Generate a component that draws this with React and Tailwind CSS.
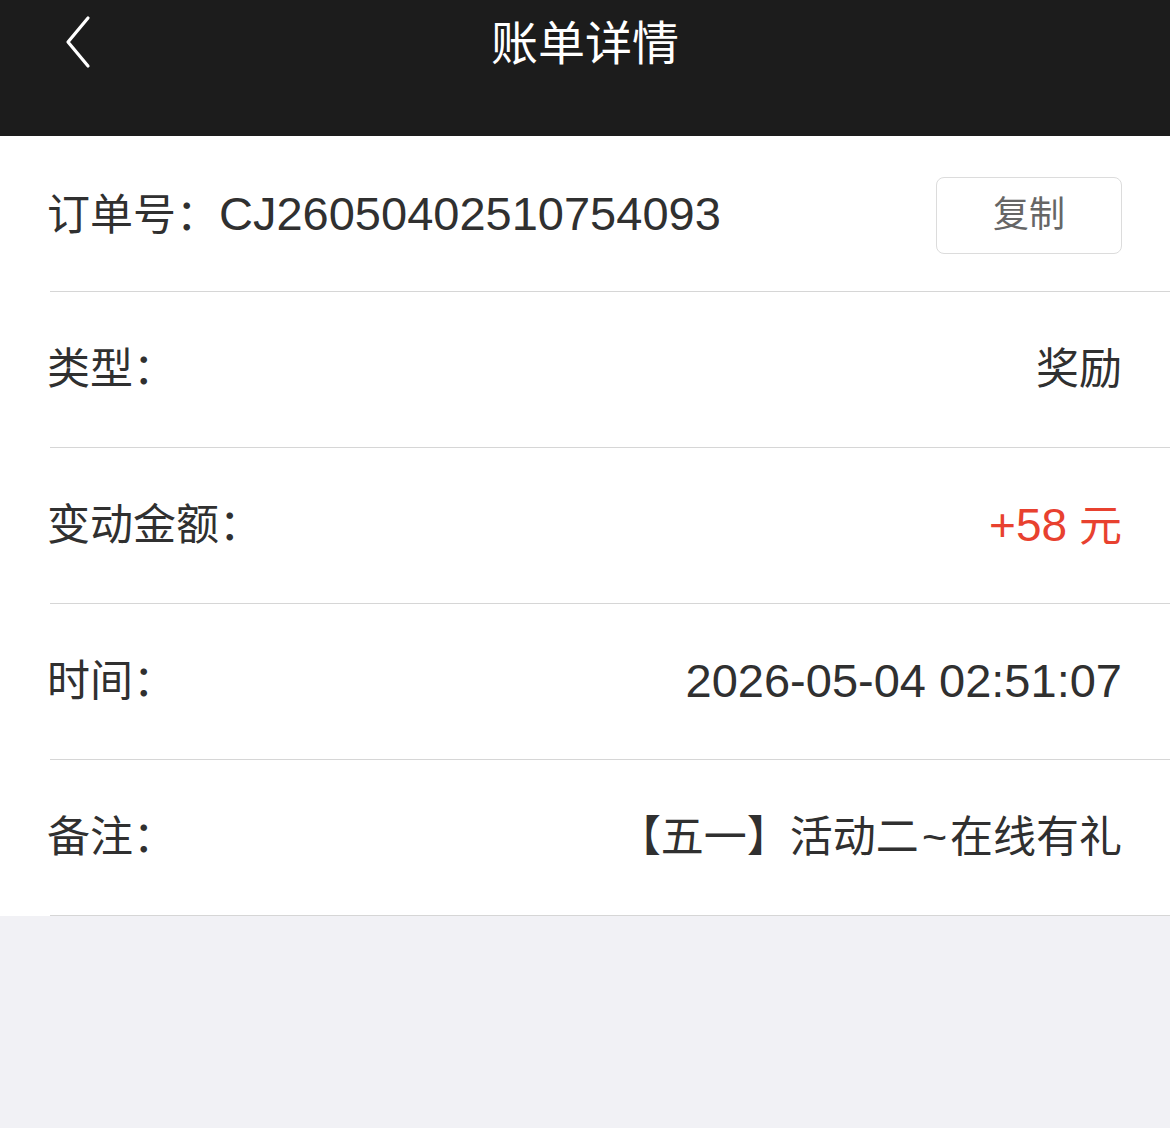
export default function App() {
  const rows = [
    { label: '类型：', value: <span>奖励</span> },
    {
      label: '变动金额：',
      value: (
        <span className="text-[#e8412f]">
          <span className="text-[46px]">+58</span> 元
        </span>
      ),
    },
    { label: '时间：', value: <span className="text-[47px]">2026-05-04 02:51:07</span> },
    {
      label: '备注：',
      value: (
        <span>
          【五一】活动二<span className="mx-[3px]">~</span>在线有礼
        </span>
      ),
    },
  ];

  return (
    <div
      className="min-h-[1128px] bg-[#f1f1f5] text-[#303030]"
      style={{ fontFamily: '"Liberation Sans", "Noto Sans CJK SC", sans-serif' }}
    >
      <div className="h-[136px] bg-[#1c1c1c]">
        <div className="relative flex h-[88px] items-center justify-center">
          <button className="absolute left-[58px] top-[10px] p-1">
            <svg width="32" height="56" viewBox="0 0 32 56" fill="none">
              <path d="M26 4 L6 28 L26 52" stroke="#fff" strokeWidth="3.2" strokeLinecap="round" strokeLinejoin="round" />
            </svg>
          </button>
          <h1 className="text-[47px] font-normal text-white">账单详情</h1>
        </div>
      </div>

      <div className="bg-white">
        <div className="ml-[50px] flex h-[156px] items-center justify-between border-b border-[#d6d6d6] pr-[48px]">
          <div className="-ml-[3px] pt-[2px] text-[43px]">
            订单号：<span className="text-[47px]">CJ26050402510754093</span>
          </div>
          <button className="mt-[3px] flex h-[77px] w-[186px] items-center justify-center rounded-[8px] border border-[#dcdcdc] text-[36px] text-[#666]">
            复制
          </button>
        </div>
        {rows.map((r) => (
          <div
            key={r.label}
            className="ml-[50px] flex h-[156px] items-center justify-between border-b border-[#d6d6d6] pr-[48px]"
          >
            <div className="-ml-[3px] text-[43px]">{r.label}</div>
            <div className="text-[43px]">{r.value}</div>
          </div>
        ))}
      </div>
    </div>
  );
}
